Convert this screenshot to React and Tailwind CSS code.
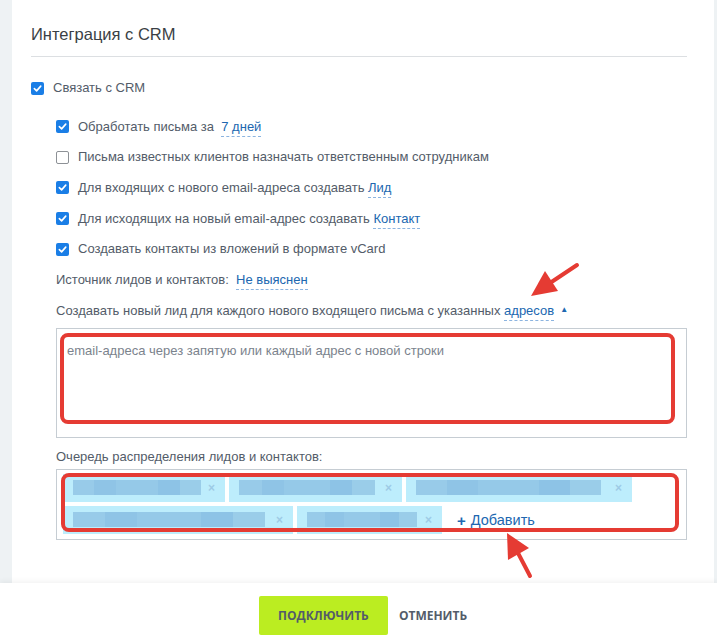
import React from 'react';

const Check = ({ checked }) =>
  checked ? (
    <span className="w-[13px] h-[13px] rounded-[2px] bg-[#1a7ee6] flex items-center justify-center shrink-0">
      <svg width="9" height="9" viewBox="0 0 10 10" fill="none">
        <path d="M1.5 5.2 L4 7.6 L8.6 2.4" stroke="white" strokeWidth="1.8" strokeLinecap="round" strokeLinejoin="round" />
      </svg>
    </span>
  ) : (
    <span className="w-[13px] h-[13px] rounded-[2px] bg-white border border-[#8d9196] shrink-0" />
  );

const Link = ({ children }) => (
  <span className="text-[#2067b0] border-b border-dashed border-[#8cb4e0] leading-[15px] pb-[2px]">{children}</span>
);

const Row = ({ checked, children }) => (
  <div className="h-[30.7px] flex items-center gap-[9px]">
    <Check checked={checked} />
    <span>{children}</span>
  </div>
);

const Tag = ({ w, bar }) => (
  <div className={`h-[28px] bg-[#bdedfc] flex items-center pl-[10px] pr-[10px] justify-between ${w}`}>
    <div className={`h-[15px] flex ${bar}`}>
      <div className="flex-1 bg-[#98cbe9]" />
      <div className="flex-1 bg-[#8fc4e6]" />
      <div className="flex-[2] bg-[#95c9e8]" />
      <div className="flex-1 bg-[#8dc3e6]" />
      <div className="flex-1 bg-[#9acde9]" />
    </div>
    <span className="text-[#9dcbe6] text-[12px] font-bold leading-none">×</span>
  </div>
);

export default function App() {
  return (
    <div className="relative w-[717px] h-[643px] overflow-hidden bg-[#eef2f4] flex flex-col text-[13px] text-[#535c69]" style={{ fontFamily: '"Liberation Sans", Arial, sans-serif' }}>
      <div className="flex flex-1 min-h-0">
        <div className="w-[12px] shrink-0" />
        <div className="flex-1 bg-white pl-[19px] pr-[27px] pt-[23px]">
          <div className="text-[16.5px] leading-[22px] text-[#3a3f45] pb-[11px] border-b border-[#dcdfe2]">Интеграция с CRM</div>

          <div className="mt-[16px] h-[30px] flex items-center gap-[9px]">
            <Check checked />
            <span>Связать с CRM</span>
          </div>

          <div className="mt-[8px] pl-[25px]">
            <Row checked>
              Обработать письма за&nbsp; <Link>7 дней</Link>
            </Row>
            <Row checked={false}>Письма известных клиентов назначать ответственным сотрудникам</Row>
            <Row checked>
              Для входящих с нового email-адреса создавать <Link>Лид</Link>
            </Row>
            <Row checked>
              Для исходящих на новый email-адрес создавать <Link>Контакт</Link>
            </Row>
            <Row checked>Создавать контакты из вложений в формате vCard</Row>
            <div className="h-[30.7px] flex items-center">
              <span>
                Источник лидов и контактов:&nbsp; <Link>Не выяснен</Link>
              </span>
            </div>
            <div className="h-[30.7px] flex items-center">
              <span>
                Создавать новый лид для каждого нового входящего письма с указанных <Link>адресов</Link>
              </span>
              <span className="ml-[6px] text-[#2067b0] text-[8px] leading-none">▲</span>
            </div>

            <div className="mt-[2px] h-[110px] border border-[#c6cdd3] px-[10px] pt-[14px] text-[#7b838d] leading-[16px]">
              email-адреса через запятую или каждый адрес с новой строки
            </div>

            <div className="mt-[8px] h-[22px] flex items-center">Очередь распределения лидов и контактов:</div>
            <div className="mt-[1px] h-[71px] border border-[#c6cdd3] pl-[6px] pt-[4px] flex flex-col gap-[4px]">
              <div className="flex gap-[4px]">
                <Tag w="w-[162px]" bar="w-[128px]" />
                <Tag w="w-[173px]" bar="w-[136px]" />
                <Tag w="w-[226px]" bar="w-[185px]" />
              </div>
              <div className="flex gap-[4px] items-center">
                <Tag w="w-[230px]" bar="w-[192px]" />
                <Tag w="w-[145px]" bar="w-[110px]" />
                <span className="ml-[11px] mt-[2px] text-[#2067b0] text-[14.5px] flex items-center gap-[5px]">
                  <span className="font-bold text-[15px] leading-none">+</span>
                  Добавить
                </span>
              </div>
            </div>
          </div>
        </div>
        <div className="w-[3px] shrink-0" />
      </div>

      <div className="h-[60px] shrink-0 bg-white shadow-[0_-2px_5px_rgba(0,0,0,0.05)] flex items-start justify-center pt-[13px] gap-[11px] pl-[9px]" style={{ fontFamily: '"Open Sans", sans-serif' }}>
        <div className="w-[129px] h-[39px] rounded-[2px] bg-[#bbed21] flex items-center justify-center text-[12px] font-bold text-[#535c69]">ПОДКЛЮЧИТЬ</div>
        <div className="h-[39px] flex items-center text-[12px] font-bold text-[#535c69]">ОТМЕНИТЬ</div>
      </div>

      <svg className="absolute inset-0 pointer-events-none" width="717" height="643" viewBox="0 0 717 643">
        <rect x="62" y="335" width="611" height="87" rx="6" fill="none" stroke="#e53b33" strokeWidth="4" />
        <rect x="63" y="475" width="614" height="55" rx="6" fill="none" stroke="#e53b33" strokeWidth="4" />
        <line x1="577" y1="265" x2="550" y2="283" stroke="#e53b33" strokeWidth="4" strokeLinecap="round" />
        <polygon points="531,296 558,291 545,271" fill="#e53b33" />
        <line x1="530" y1="576" x2="518" y2="553" stroke="#e53b33" strokeWidth="4" strokeLinecap="round" />
        <polygon points="507,533 529,548 508,560" fill="#e53b33" />
      </svg>
    </div>
  );
}
